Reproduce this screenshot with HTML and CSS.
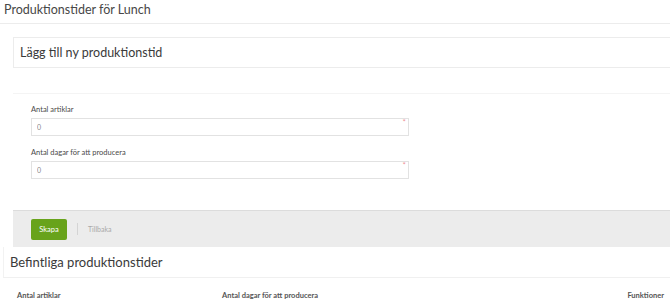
FILE: index.html
```html
<!DOCTYPE html>
<html lang="sv">
<head>
<meta charset="utf-8">
<title>Produktionstider för Lunch</title>
<link rel="stylesheet" href="styles.css">
</head>
<body>
<h1 class="page-title">Produktionstider för Lunch</h1>
<section class="add-section">
  <div class="box-header">
    <h2 class="box-title">Lägg till ny produktionstid</h2>
  </div>
  <form class="form-panel">
    <div class="field">
      <label class="field-label">Antal artiklar</label>
      <div class="input-wrap">
        <input class="text-input" type="text" value="0">
        <span class="req">*</span>
      </div>
    </div>
    <div class="field">
      <label class="field-label">Antal dagar för att producera</label>
      <div class="input-wrap">
        <input class="text-input" type="text" value="0">
        <span class="req">*</span>
      </div>
    </div>
  </form>
  <div class="form-actions">
    <button class="btn-primary" type="button">Skapa</button>
    <span class="divider"></span>
    <span class="link-back">Tillbaka</span>
  </div>
</section>
<section class="list-section">
  <div class="list-header">
    <h2 class="list-title">Befintliga produktionstider</h2>
  </div>
  <div class="table-head">
    <span class="col col-a">Antal artiklar</span>
    <span class="col col-b">Antal dagar för att producera</span>
    <span class="col col-c">Funktioner</span>
  </div>
</section>
</body>
</html>
```
FILE: styles.css
```css
* { box-sizing: border-box; }
html, body {
  margin: 0;
  padding: 0;
  background: #fff;
  font-family: Lato, "Open Sans", sans-serif;
  color: #444;
  width: 670px;
  overflow: hidden;
}
.page-title {
  margin: 0;
  height: 24px;
  padding: 3px 0 0 4px;
  font-size: 12.5px;
  font-weight: 400;
  color: #474747;
  border-bottom: 1px solid #ececec;
  line-height: 14px;
}
.add-section {
  margin-top: 13px;
  margin-left: 13px;
}
.box-header {
  height: 31px;
  border: 1px solid #ececec;
  border-right: none;
  display: flex;
  align-items: center;
  padding-left: 6px;
}
.box-title {
  margin: 0;
  font-size: 12.5px;
  font-weight: 400;
  color: #3a3a3a;
}
.form-panel {
  margin-top: 25px;
  border-top: 1px solid #f4f4f4;
  padding: 11px 0 31px 18px;
}
.field { margin-bottom: 12px; }
.field:last-child { margin-bottom: 0; }
.field-label {
  display: block;
  font-size: 7.5px;
  color: #4a4a4a;
  line-height: 10px;
  margin-bottom: 3px;
}
.input-wrap {
  position: relative;
  width: 378px;
}
.text-input {
  display: block;
  width: 378px;
  height: 18px;
  border: 1px solid #e2e2e2;
  padding: 0 5px;
  font-family: Lato, sans-serif;
  font-size: 7px;
  color: #888;
  background: #fff;
  outline: none;
}
.req {
  position: absolute;
  right: 3px;
  top: 0;
  font-size: 8px;
  line-height: 8px;
  color: #ee8f95;
}
.form-actions {
  height: 37px;
  background: #ececec;
  border-top: 1px solid #dcdcdc;
  display: flex;
  align-items: center;
  padding-left: 18px;
}
.btn-primary {
  width: 36px;
  height: 21px;
  background: #68a31b;
  border: none;
  border-radius: 2px;
  color: #fff;
  font-family: Lato, sans-serif;
  font-size: 7.5px;
  padding: 0;
}
.divider {
  width: 1px;
  height: 12px;
  background: #d4d4d4;
  margin: 0 10px 0 10px;
}
.link-back {
  font-size: 7px;
  color: #a9a9a9;
}
.list-section {
  margin-left: 3px;
}
.list-header {
  height: 31px;
  border-left: 1px solid #f2f2f2;
  border-bottom: 1px solid #f0f0f0;
  display: flex;
  align-items: center;
  padding-left: 6px;
}
.list-title {
  margin: 0;
  font-size: 13px;
  font-weight: 400;
  color: #3a3a3a;
}
.table-head {
  display: flex;
  padding-top: 13px;
  font-size: 7.5px;
  font-weight: 700;
  color: #555;
}
.col-a { margin-left: 14px; width: 205px; }
.col-b { flex: 1; }
.col-c { margin-right: 6px; }
```
